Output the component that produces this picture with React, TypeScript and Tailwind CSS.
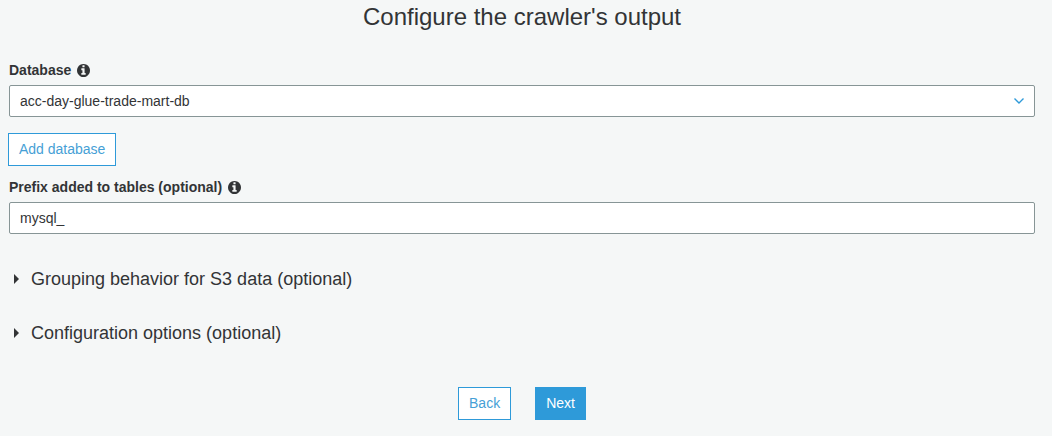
import type { ReactNode } from "react";

function InfoIcon() {
  return (
    <svg viewBox="0 0 1536 1536" className="size-[13px] shrink-0" fill="currentColor" aria-hidden="true">
      <path d="M1024 1248v-160q0-14-9-23t-23-9h-96V544q0-14-9-23t-23-9H544q-14 0-23 9t-9 23v160q0 14 9 23t23 9h96v320h-96q-14 0-23 9t-9 23v160q0 14 9 23t23 9h448q14 0 23-9t9-23zM896 352V192q0-14-9-23t-23-9H672q-14 0-23 9t-9 23v160q0 14 9 23t23 9h192q14 0 23-9t9-23zm640 416q0 209-103 385.500T1153.500 1433 768 1536t-385.500-103T103 1153.500 0 768t103-385.500T382.500 103 768 0t385.500 103T1433 382.500 1536 768z" />
    </svg>
  );
}

function FieldLabel({ htmlFor, children }: { htmlFor: string; children: ReactNode }) {
  return (
    <label htmlFor={htmlFor} className="flex h-5 items-center gap-1.5 text-sm font-bold">
      {children}
      <InfoIcon />
    </label>
  );
}

function Section({ title }: { title: string }) {
  return (
    <button type="button" aria-expanded={false} className="flex h-6 items-center gap-3 pl-[5px] text-lg leading-6">
      <svg viewBox="0 0 5 10" className="h-[10px] w-[5px]" fill="currentColor" aria-hidden="true">
        <path d="M0 0L5 5L0 10Z" />
      </svg>
      {title}
    </button>
  );
}

const fieldClass =
  "h-8 w-full appearance-none rounded-xs border border-[#879596] bg-white px-[10px] text-sm outline-none focus:border-[#2e9ad9]";
const outlineButton = "h-[33px] border border-[#2e9ad9] bg-white px-[10px] pb-0.5 text-sm text-[#469fd6]";

export default function App() {
  return (
    <main className="min-h-screen bg-[#f5f7f7] pr-[17px] pb-4 pl-[9px] font-['Liberation_Sans',Arial,sans-serif] text-[#323436]">
      <h1 className="pt-px text-center text-2xl leading-8">Configure the crawler's output</h1>
      <form className="mt-[27px]" onSubmit={(e) => e.preventDefault()}>
        <FieldLabel htmlFor="database">Database</FieldLabel>
        <div className="mt-[5px] grid items-center">
          <select id="database" className={`${fieldClass} col-start-1 row-start-1`}>
            <option>acc-day-glue-trade-mart-db</option>
          </select>
          <svg
            viewBox="0 0 10 6"
            className="pointer-events-none col-start-1 row-start-1 mr-[11px] h-[6px] w-[10px] justify-self-end"
            fill="none"
            stroke="#2e9ad9"
            strokeWidth="1.4"
            aria-hidden="true"
          >
            <path d="M0.500 0.500L5 5L9.500 0.500" />
          </svg>
        </div>
        <button type="button" className={`${outlineButton} -ml-px mt-4 block`}>
          Add database
        </button>
        <div className="mt-[11px]">
          <FieldLabel htmlFor="prefix">Prefix added to tables (optional)</FieldLabel>
          <input id="prefix" type="text" defaultValue="mysql_" className={`${fieldClass} mt-[5px] block`} />
        </div>
        <div className="mt-[33px] flex flex-col items-start gap-[30px]">
          <Section title="Grouping behavior for S3 data (optional)" />
          <Section title="Configuration options (optional)" />
        </div>
        <div className="mt-[42px] flex justify-center gap-6">
          <button type="button" className={outlineButton}>
            Back
          </button>
          <button type="submit" className="h-[33px] border border-[#2e9ad9] bg-[#2e9ad9] px-[10px] pb-0.5 text-sm text-white">
            Next
          </button>
        </div>
      </form>
    </main>
  );
}
